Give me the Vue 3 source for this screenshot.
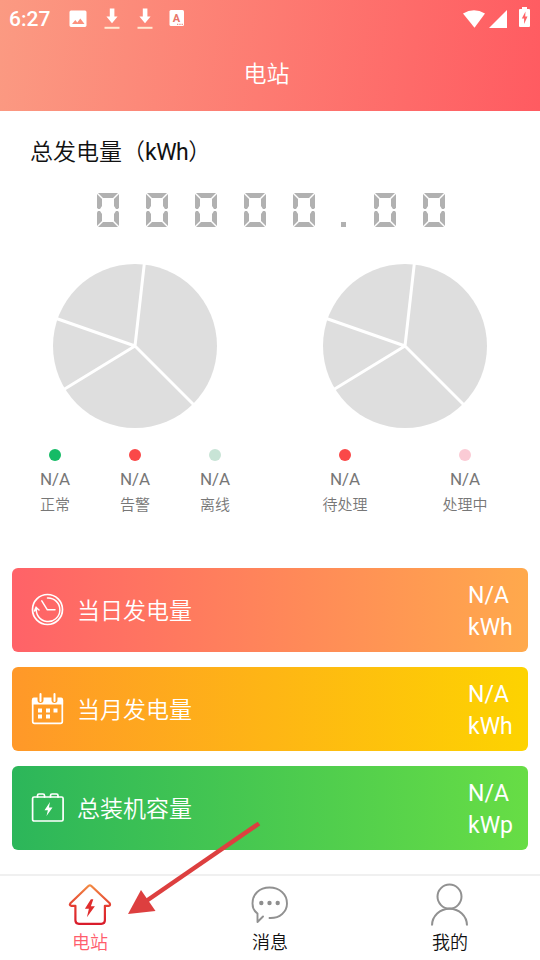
<template>
  <div class="page">
    <header class="header">
      <div class="status-bar">
        <span class="time">6:27</span>
        <svg class="ic-image" width="18" height="18" viewBox="0 0 18 18">
          <path fill="#fff" fill-rule="evenodd" d="M2 .5h14A1.6 1.6 0 0 1 17.500 2v13.500a1.600 1.600 0 0 1-1.500 1.500H2A1.600 1.600 0 0 1 .5 15.500V2A1.600 1.600 0 0 1 2 .5zM3 14h12.500l-4.200-5.500-3 4-2-2.500z" />
        </svg>
        <svg v-for="n in 2" :key="n" class="ic-download" width="16" height="22" viewBox="0 0 16 22">
          <path fill="#fff" d="M5.800 .5h4.600v8h3.200L8 15.300 2.400 8.500h3.400z" />
          <path fill="#ffe9d2" d="M.5 18.800h15v2H.5z" />
        </svg>
        <svg class="ic-lang" width="16" height="18" viewBox="0 0 16 18">
          <rect x=".5" y="1" width="14.500" height="16" rx="1.500" fill="#fff" />
          <text x="7.500" y="12.500" class="lang-letter">A</text>
          <path stroke="#e8776b" stroke-width="1" stroke-dasharray="1.300 1" d="M8 15.300h6" />
        </svg>
        <span class="spacer"></span>
        <svg width="22" height="18" viewBox="0 0 22 18">
          <path fill="#fff" d="M0 3.400Q11-3 22 3.400L11.500 17.800z" />
        </svg>
        <svg class="ic-signal" width="18" height="18" viewBox="0 0 18 18">
          <path fill="#fff" d="M18 0v18H0z" />
        </svg>
        <svg class="ic-battery" width="11" height="20" viewBox="0 0 11 20">
          <path fill="#fff" d="M3 0h5v2h2q1 0 1 1v16q0 1-1 1H1q-1 0-1-1V3q0-1 1-1h2z" />
          <path fill="#ff6467" d="M6.500 4.500 2.800 11.500h2.300v5.500L8.500 9.500H6.200z" />
        </svg>
      </div>
      <h1 class="title">电站</h1>
    </header>

    <main class="content">
      <h2 class="total-title">总发电量（<span class="unit">kWh</span>）</h2>

      <!-- 数码管 -->
      <div class="counter" role="img" :aria-label="total">
        <template v-for="(ch, i) in total" :key="i">
          <span v-if="ch === '.'" class="dot-cell"></span>
          <span v-else class="digit">
            <i v-for="s in segments" :key="s" :class="['seg', s]"></i>
          </span>
        </template>
      </div>

      <div class="charts">
        <section v-for="(group, i) in groups" :key="i" class="chart">
          <svg class="pie" width="164" height="164" viewBox="0 0 164 164">
            <circle cx="82" cy="82" r="82" fill="#dedede" />
            <path stroke="#fff" stroke-width="3" d="M82 82 91.500-2M82 82 142 142M82 82 10 126M82 82 2 54" />
          </svg>
          <ul class="legend">
            <li v-for="item in group" :key="item.label">
              <span class="mark" :style="{ background: item.color }"></span>
              <span class="num">N/A</span>
              <span class="name">{{ item.label }}</span>
            </li>
          </ul>
        </section>
      </div>

      <div class="cards">
        <div v-for="card in cards" :key="card.type" :class="['card', card.type]">
          <svg v-if="card.type === 'day'" class="card-icon" viewBox="0 0 34 34">
            <circle cx="17.500" cy="16.500" r="15" stroke-width="1.700" />
            <path stroke-width="1.500" d="M17.500 5A11.800 11.800 0 1 1 6.500 14.500M4.500 18 6 14.500l3 2.500M11.800 7.800l5.500 9H25" />
          </svg>
          <svg v-else-if="card.type === 'month'" class="card-icon" viewBox="0 0 34 34">
            <path stroke-width="1.700" d="M2.700 8v21.500q0 1.800 1.800 1.800h26q1.800 0 1.800-1.800V8" />
            <path class="fill" d="M1.900 12.500V7.500q0-2 2-2H7.500v2.500q0 3 3 3t3-3V5.500h8v2.500q0 3 3 3t3-3V5.500h3.600q2 0 2 2v5z" />
            <path stroke-width="2" d="M10.500 2v7M24.500 2v7" />
            <path class="fill" d="M8 16.500h4v4H8zM16 16.500h4v4h-4zM23.500 16.500h4v4h-4zM8 22.500h4v4H8zM16 22.500h4v4h-4z" />
          </svg>
          <svg v-else class="card-icon" viewBox="0 0 34 34">
            <rect x="2.600" y="6" width="30.500" height="24" rx="1.500" stroke-width="1.700" />
            <path stroke-width="1.700" d="M7.500 6V4.500Q7.500 3 9 3h4q1.500 0 1.500 1.500V6M20.500 6V4.500Q20.500 3 22 3h4.500q1.500 0 1.500 1.500V6" />
            <path class="fill" d="m20 11-5.500 8.300h3.400L16.500 25l6-8.500h-3.600z" />
          </svg>
          <span class="card-label">{{ card.label }}</span>
          <span class="card-value">N/A<br />{{ card.unit }}</span>
        </div>
      </div>
    </main>

    <nav class="tabbar">
      <a class="tab active">
        <svg width="44" height="44" viewBox="0 0 44 44">
          <defs>
            <linearGradient id="house" x1="0" y1="0" x2="0" y2="1">
              <stop offset="0" stop-color="#f28a43" />
              <stop offset=".55" stop-color="#e33a31" />
              <stop offset="1" stop-color="#d91c2b" />
            </linearGradient>
          </defs>
          <g transform="translate(.4 .8)">
            <path fill="none" stroke="url(#house)" stroke-width="2.200" stroke-linejoin="round" d="M20 3.200q1.500-1.200 3 0L41.300 20.500q1 2.300-1 2.500H36.500V37.500q0 3.500-3.500 3.500H10.500Q7 41 7 37.500V23H3q-2.500-.5-1-2.500z" />
            <path fill="#e02d2d" d="m22.500 16.500-6 9.500h4l-2 8.500 8-11h-4l2.400-7z" />
          </g>
        </svg>
        <span>电站</span>
      </a>
      <a class="tab">
        <svg width="44" height="44" viewBox="0 0 44 44">
          <g fill="none" stroke="#919191" stroke-width="1.900" stroke-linecap="round" stroke-linejoin="round">
            <path d="M21.500 36C32 36.500 39 29.500 39 21.500 39 12 31.500 5.500 21.500 5.500S4.500 12 4.500 21.500Q4.500 28 9.500 31.500v8.500l5.500-5.500" />
          </g>
          <g fill="#8e8e8e">
            <circle cx="13.300" cy="21" r="2.200" />
            <circle cx="21.500" cy="21" r="2.200" />
            <circle cx="29.700" cy="21" r="2.200" />
          </g>
        </svg>
        <span>消息</span>
      </a>
      <a class="tab">
        <svg width="44" height="44" viewBox="0 0 44 44">
          <g fill="none" stroke="#919191" stroke-width="2">
            <circle cx="21.500" cy="14.600" r="12" />
            <path d="M4 43.500C4 34 12 26.700 21.500 26.700S39 34 39 43.500" />
          </g>
        </svg>
        <span>我的</span>
      </a>
    </nav>

    <!-- 指向电站标签的箭头 -->
    <svg class="arrow" width="134" height="94" viewBox="0 0 134 94">
      <path stroke="#dd3f3f" stroke-width="4.500" d="M132 2.500 20 79.500" />
      <path fill="#dd3f3f" d="M1 93 14 69 28.500 90z" />
    </svg>
  </div>
</template>

<script setup>
// 总发电量
const total = '00000.00'

const segments = ['top', 'left-up', 'right-up', 'left-down', 'right-down', 'bottom']

const groups = [
  [
    { label: '正常', color: '#15bb66' },
    { label: '告警', color: '#fa4848' },
    { label: '离线', color: '#c8e4d6' }
  ],
  [
    { label: '待处理', color: '#fa4848' },
    { label: '处理中', color: '#fbcbd5' }
  ]
]

const cards = [
  { type: 'day', label: '当日发电量', unit: 'kWh' },
  { type: 'month', label: '当月发电量', unit: 'kWh' },
  { type: 'capacity', label: '总装机容量', unit: 'kWp' }
]
</script>

<style>
body {
  margin: 0;
}
</style>

<style scoped>
.page {
  position: relative;
  display: flex;
  flex-direction: column;
  width: 540px;
  height: 960px;
  overflow: hidden;
  background: #fff;
  font-family: Roboto, 'Noto Sans CJK SC', sans-serif;
}

.header {
  height: 111px;
  background: linear-gradient(97deg, #fb9a82, #ff5b61);
  color: #fff;
}

.status-bar {
  display: flex;
  align-items: center;
  height: 37px;
  padding: 0 10px 0 9px;
}

.time {
  width: 60px;
  font-size: 21px;
  font-weight: 500;
}

.ic-download {
  margin-left: 17px;
}

.ic-lang {
  margin: -1px 0 0 16px;
}

.lang-letter {
  fill: #e8776b;
  font-size: 11px;
  font-weight: 700;
  text-anchor: middle;
}

.spacer {
  flex: 1;
}

.ic-signal {
  margin-left: 4px;
}

.ic-battery {
  margin: -3px 0 0 12px;
}

.title {
  margin: 21px 7px 0 0;
  font-size: 23px;
  font-weight: 350;
  line-height: 34px;
  text-align: center;
}

.content {
  flex: 1;
}

.total-title {
  margin: 25px 0 0 30px;
  font-size: 23px;
  font-weight: 350;
  line-height: 34px;
  color: #111;
}

.unit {
  font-weight: 400;
  letter-spacing: -0.5px;
}

.counter {
  display: flex;
  align-items: flex-end;
  gap: 27px;
  height: 34px;
  margin: 23px 0 0 97px;
}

.digit {
  position: relative;
  width: 22px;
  height: 34px;
}

.seg {
  position: absolute;
  background: #b1b1b1;
}

.top,
.bottom {
  left: 1px;
  width: 20px;
  height: 5px;
  clip-path: polygon(0 0, 100% 0, 75% 100%, 25% 100%);
}

.top {
  top: 0;
}

.bottom {
  bottom: 0;
  transform: scaleY(-1);
}

.left-up,
.right-up,
.left-down,
.right-down {
  width: 5px;
  height: 15px;
  clip-path: polygon(0 0, 100% 33%, 100% 80%, 60% 100%, 20% 100%, 0 90%);
}

.left-up {
  top: 1px;
  left: 0;
}

.right-up {
  top: 1px;
  right: 0;
  transform: scaleX(-1);
}

.left-down {
  bottom: 1px;
  left: 0;
  transform: scaleY(-1);
}

.right-down {
  right: 0;
  bottom: 1px;
  transform: scale(-1);
}

.dot-cell {
  width: 5px;
  height: 5px;
  margin: 0 1px 0 -1px;
  background: #b1b1b1;
}

.charts {
  display: grid;
  grid-template-columns: 1fr 1fr;
  margin-top: 37px;
}

.pie {
  display: block;
  margin: 0 auto;
}

.legend {
  display: flex;
  margin: 21px 15px 0;
  padding: 0;
  list-style: none;
}

.legend li {
  flex: 1;
  display: flex;
  flex-direction: column;
  align-items: center;
  color: #777;
}

.mark {
  width: 12px;
  height: 12px;
  border-radius: 50%;
}

.num {
  margin-top: 8px;
  font-size: 17px;
  line-height: 20px;
}

.name {
  margin-top: 4px;
  font-size: 15px;
  font-weight: 350;
  line-height: 24px;
}

.cards {
  display: flex;
  flex-direction: column;
  gap: 15px;
  margin: 51px 12px 0;
}

.card {
  display: flex;
  align-items: center;
  height: 84px;
  padding: 0 15px 0 18px;
  box-sizing: border-box;
  border-radius: 6px;
  color: #fff;
}

.day {
  background: linear-gradient(90deg, #ff6268, #ffa94c);
}

.month {
  background: linear-gradient(90deg, #ff9829, #fdd300);
}

.capacity {
  background: linear-gradient(90deg, #2cb65a, #67dd45);
}

.card-icon {
  width: 34px;
  height: 34px;
  fill: none;
  stroke: #fff;
  stroke-linecap: round;
}

.card-icon .fill {
  fill: #fff;
  stroke: none;
}

.card-label {
  flex: 1;
  margin: 4px 0 0 13px;
  font-size: 23px;
  font-weight: 350;
  line-height: 34px;
}

.card-value {
  width: 45px;
  margin-top: 4px;
  font-size: 23px;
  line-height: 32px;
}

.tabbar {
  display: flex;
  height: 86px;
  box-sizing: border-box;
  border-top: 2px solid #f0f0f0;
}

.tab {
  flex: 1;
  display: flex;
  flex-direction: column;
  align-items: center;
  padding-top: 6px;
  font-size: 18px;
  font-weight: 350;
  line-height: 26px;
  color: #111;
}

.tab span {
  margin-top: 4px;
}

.active {
  color: #ff5d6c;
}

.arrow {
  position: absolute;
  top: 821px;
  left: 127px;
}
</style>
